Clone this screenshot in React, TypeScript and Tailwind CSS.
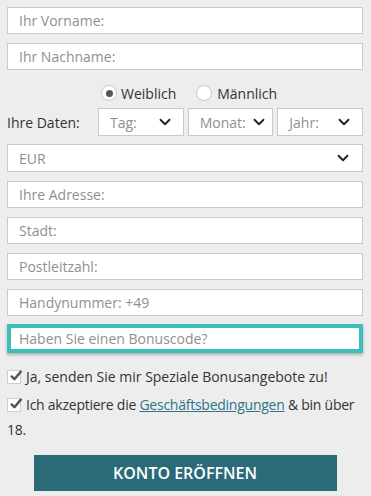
import { ChevronDown } from "lucide-react";

const Field = ({ placeholder }: { placeholder: string }) => (
  <div className="h-[27px] bg-white border border-[#c9c9c9] flex items-center pl-[11px] text-[14px] text-[#8f8f8f]">
    {placeholder}
  </div>
);

const Select = ({ label, pr = "pr-[9px]" }: { label: string; pr?: string }) => (
  <div
    className={`h-[28px] bg-white border border-[#c9c9c9] flex items-center justify-between pl-[11px] ${pr} text-[14px] text-[#8f8f8f]`}
  >
    <span>{label}</span>
    <ChevronDown size={18} strokeWidth={2.4} className="text-[#1f1f1f]" />
  </div>
);

const Check = () => (
  <span className="relative inline-block w-[14px] h-[14px] bg-white border border-[#cfcfcf] shrink-0">
    <svg
      viewBox="0 0 16 16"
      className="absolute left-[1px] -top-[2px] w-[14px] h-[14px]"
      fill="none"
      stroke="#555"
      strokeWidth={2.8}
      strokeLinecap="round"
      strokeLinejoin="round"
    >
      <path d="M3 8.5l3.2 3.2L13.5 3" />
    </svg>
  </span>
);

const App = () => {
  return (
    <div
      className="w-[371px] h-[496px] bg-[#ededed] pl-[7px] pr-[8px] pt-[7px] text-[#333]"
      style={{ fontFamily: '"Open Sans", sans-serif' }}
    >
      <div className="flex flex-col gap-[9px]">
        <Field placeholder="Ihr Vorname:" />
        <Field placeholder="Ihr Nachname:" />
      </div>

      <div className="flex items-center pl-[94px] mt-[14px] h-[18px] text-[14px] text-[#333]">
        <span className="w-[16px] h-[16px] rounded-full bg-white border border-[#c9c9c9] flex items-center justify-center">
          <span className="w-[7px] h-[7px] rounded-full bg-[#555]" />
        </span>
        <span className="ml-[4px]">Weiblich</span>
        <span className="ml-[20px] w-[16px] h-[16px] rounded-full bg-white border border-[#c9c9c9]" />
        <span className="ml-[5px]">Männlich</span>
      </div>

      <div className="flex items-center mt-[6px]">
        <span className="w-[91px] text-[14px] text-[#333]">Ihre Daten:</span>
        <div className="flex-1 grid grid-cols-3 gap-[4px]">
          <Select label="Tag:" />
          <Select label="Monat:" pr="pr-[4px]" />
          <Select label="Jahr:" />
        </div>
      </div>

      <div className="flex flex-col gap-[9px] mt-[8px]">
        <Select label="EUR" pr="pr-[10px]" />
        <Field placeholder="Ihre Adresse:" />
        <Field placeholder="Stadt:" />
        <Field placeholder="Postleitzahl:" />
        <Field placeholder="Handynummer: +49" />
      </div>

      <div className="mt-[8px] h-[29px] bg-white border-4 border-[#3cbfba] shadow-[0_2px_3px_rgba(0,0,0,0.25)] flex items-center pl-[8px] text-[14px] text-[#8f8f8f]">
        Haben Sie einen Bonuscode?
      </div>

      <div className="mt-[11px] flex items-center gap-[5px] text-[14px] text-[#333] leading-[25px]">
        <Check />
        <span>Ja, senden Sie mir Speziale Bonusangebote zu!</span>
      </div>

      <div className="mt-[3px] text-[14px] tracking-[-0.25px] text-[#333] leading-[25px]">
        <div className="flex items-center gap-[5px] whitespace-nowrap">
          <Check />
          <span>
            Ich akzeptiere die{" "}
            <a href="#" className="text-[#2b7587] underline">
              Geschäftsbedingungen
            </a>{" "}
            &amp; bin über
          </span>
        </div>
        <div>18.</div>
      </div>

      <div className="flex justify-center mt-[13px]">
        <button className="w-[303px] h-[36px] bg-[#2b6b78] text-white text-[16px] font-semibold uppercase">
          Konto eröffnen
        </button>
      </div>
    </div>
  );
};

export default App;
